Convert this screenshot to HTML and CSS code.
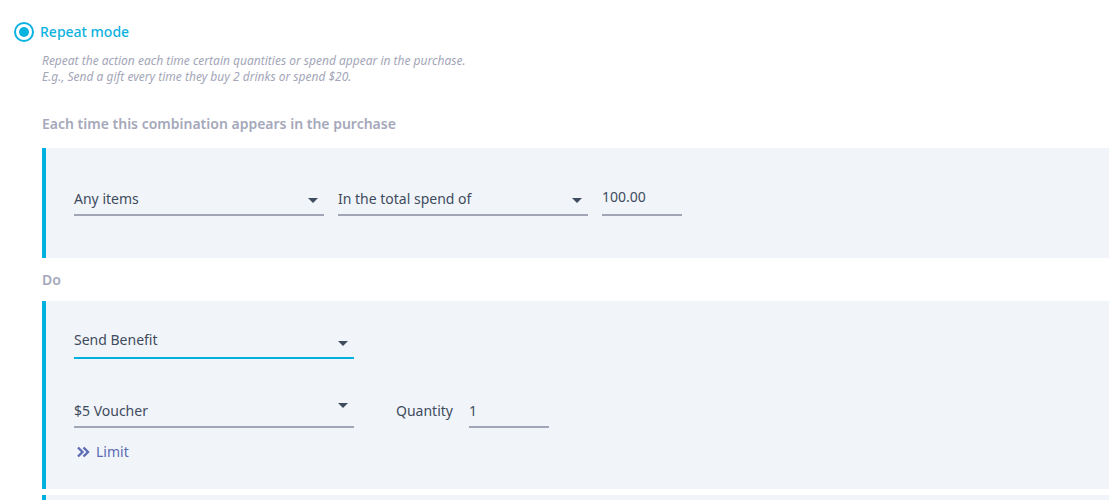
FILE: index.html
```html
<!DOCTYPE html>
<html>
<head>
<meta charset="utf-8">
<link rel="stylesheet" href="styles.css">
</head>
<body>
<div class="mode">
  <span class="radio"><span class="dot"></span></span>
  <span class="mode-title">Repeat mode</span>
</div>
<div class="content">
  <p class="desc">Repeat the action each time certain quantities or spend appear in the purchase.<br>E.g., Send a gift every time they buy 2 drinks or spend $20.</p>
  <div class="label label-each">Each time this combination appears in the purchase</div>
  <div class="panel panel-cond">
    <div class="field select w250"><span class="val">Any items</span><span class="caret"></span></div>
    <div class="field select w250"><span class="val">In the total spend of</span><span class="caret"></span></div>
    <div class="field input w80"><span class="val up">100.00</span></div>
  </div>
  <div class="label label-do">Do</div>
  <div class="panel panel-do">
    <div class="row">
      <div class="field select w280 active"><span class="val tight">Send Benefit</span><span class="caret low"></span></div>
    </div>
    <div class="row row2">
      <div class="field select w280"><span class="val">$5 Voucher</span><span class="caret high"></span></div>
      <span class="qty-label">Quantity</span>
      <div class="field input w80"><span class="val">1</span></div>
    </div>
    <div class="limit">
      <svg class="chev" width="14" height="12" viewBox="0 0 14 12"><path d="M2 1.5 L6.5 6 L2 10.5 M7.5 1.5 L12 6 L7.5 10.5" fill="none" stroke="#5b6bb5" stroke-width="2.4"/></svg>
      <span>Limit</span>
    </div>
  </div>
  <div class="panel panel-next"></div>
</div>
</body>
</html>
```
FILE: styles.css
```css
* { box-sizing: border-box; }
body {
  margin: 0;
  background: #ffffff;
  font-family: "Noto Sans", "Open Sans", sans-serif;
  color: #3f4b5e;
  overflow: hidden;
}
.mode {
  display: flex;
  align-items: center;
  gap: 6px;
  padding: 22px 0 0 14px;
  height: 42px;
}
.radio {
  width: 20px;
  height: 20px;
  border: 2px solid #0ab2e0;
  border-radius: 50%;
  display: flex;
  align-items: center;
  justify-content: center;
}
.dot {
  width: 10px;
  height: 10px;
  border-radius: 50%;
  background: #0ab2e0;
}
.mode-title {
  color: #0ab2e0;
  font-size: 14px;
  line-height: 20px;
  font-weight: 500;
}
.content {
  margin: 0 2px 0 42px;
}
.desc {
  margin: 11px 0 0 0;
  font-size: 12px;
  line-height: 16px;
  font-style: italic;
  color: #a3a6b8;
}
.label {
  font-size: 14px;
  line-height: 20px;
  font-weight: 600;
  color: #a5a8ba;
}
.label-each { margin-top: 29px; }
.label-do { margin-top: 12px; }
.panel {
  background: #f1f5f9;
  border-left: 4px solid #00b0df;
  padding-left: 28px;
}
.panel-cond {
  margin-top: 14px;
  height: 110px;
  padding-top: 36px;
  display: flex;
  align-items: flex-start;
  gap: 14px;
}
.field {
  position: relative;
  height: 32px;
  border-bottom: 2px solid #a2a5b5;
  font-size: 14px;
}
.field .val {
  display: block;
  line-height: 30px;
}
.field .val.up { line-height: 26px; }
.field .val.tight { line-height: 26px; }
.w250 { width: 250px; }
.w280 { width: 280px; }
.w80 { width: 80px; }
.field.active { border-bottom-color: #00b0df; }
.caret {
  position: absolute;
  right: 6px;
  top: 14px;
  width: 0;
  height: 0;
  border-left: 5px solid transparent;
  border-right: 5px solid transparent;
  border-top: 5px solid #3f4b5e;
}
.caret.low { top: 14px; }
.caret.high { top: 7px; }
.panel-do {
  margin-top: 11px;
  height: 188px;
  padding-top: 26px;
}
.row {
  display: flex;
  align-items: flex-start;
}
.row2 { margin-top: 37px; }
.qty-label {
  margin-left: 42px;
  margin-right: 16px;
  font-size: 14px;
  line-height: 30px;
}
.limit {
  margin-top: 14px;
  margin-left: 2px;
  display: flex;
  align-items: center;
  gap: 6px;
  font-size: 14px;
  line-height: 20px;
  color: #5b6bb5;
}
.panel-next {
  margin-top: 6px;
  height: 5px;
}
```
